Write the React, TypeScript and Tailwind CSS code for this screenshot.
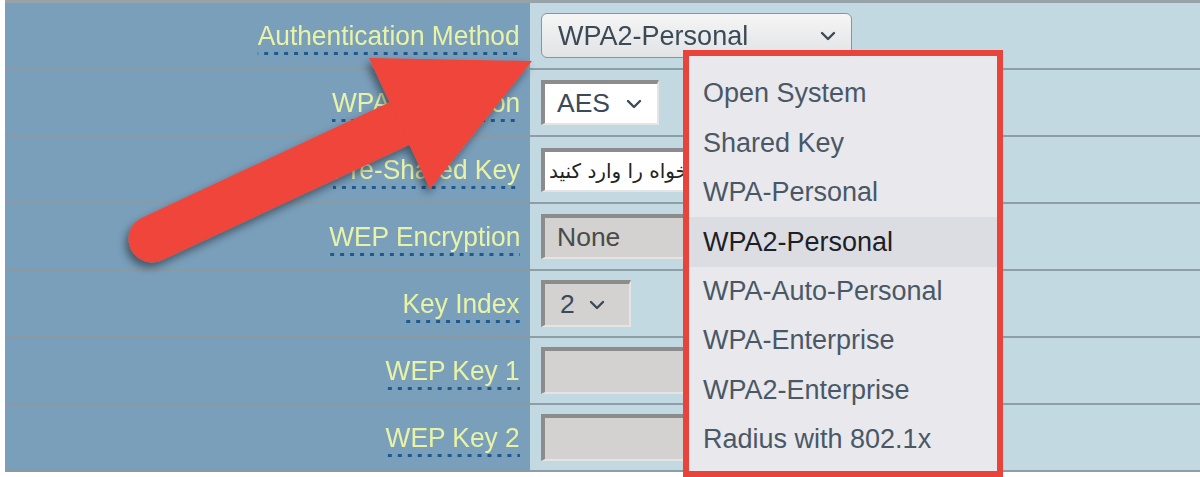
import React from "react";

const Chevron = ({ className = "" }: { className?: string }) => (
  <svg width="16" height="10" viewBox="0 0 16 10" className={className}>
    <polyline points="2,2 8,8 14,2" fill="none" stroke="currentColor" strokeWidth="2.4" strokeLinecap="round" strokeLinejoin="round" />
  </svg>
);

const labels = [
  "Authentication Method",
  "WPA Encryption",
  "Pre-Shared Key",
  "WEP Encryption",
  "Key Index",
  "WEP Key 1",
  "WEP Key 2",
];

const options = [
  "Open System",
  "Shared Key",
  "WPA-Personal",
  "WPA2-Personal",
  "WPA-Auto-Personal",
  "WPA-Enterprise",
  "WPA2-Enterprise",
  "Radius with 802.1x",
];

const inset = "border-t-[4px] border-l-[4px] border-r-[2px] border-b-[2px] border-t-[#8c8c8c] border-l-[#8c8c8c] border-r-[#e4e4e4] border-b-[#e4e4e4]";

function Control({ i }: { i: number }) {
  if (i === 0)
    return (
      <div className="w-[311px] h-[45px] rounded-[6px] border border-[#8a949b] bg-gradient-to-b from-[#f5f5f5] to-[#e1e3e5] flex items-center justify-between pl-[16px] pr-[15px]">
        <span className="inline-block origin-left scale-x-[0.965] text-[28px] text-[#3c4a57]">WPA2-Personal</span>
        <Chevron className="text-[#3c4a57]" />
      </div>
    );
  if (i === 1)
    return (
      <div className={`w-[118px] h-[45px] bg-white ${inset} flex items-center pl-[12px] text-[26.5px] text-[#3c4a57]`}>
        <span>AES</span>
        <Chevron className="ml-[16px] text-[#3c4a57]" />
      </div>
    );
  if (i === 2)
    return (
      <div className={`w-[420px] h-[44px] bg-white ${inset} flex items-center pl-[4px]`}>
        <div className="w-[134px] overflow-hidden whitespace-nowrap">
          <span dir="rtl" className="font-['DejaVu_Sans',sans-serif] text-[20px] text-[#222] whitespace-nowrap">
            لطفا رمز عبور دلخواه را وارد کنید
          </span>
        </div>
      </div>
    );
  if (i === 3)
    return (
      <div className={`w-[420px] h-[45px] bg-[#d3d2d0] ${inset} flex items-center pl-[12px] text-[26.5px] text-[#4a4a4a]`}>
        <span>None</span>
      </div>
    );
  if (i === 4)
    return (
      <div className={`w-[90px] h-[47px] bg-[#d3d2d0] ${inset} flex items-center pl-[15px] text-[26.5px] text-[#3c4a57]`}>
        <span>2</span>
        <Chevron className="ml-[14px] text-[#3c4a57]" />
      </div>
    );
  return <div className={`w-[420px] h-[47px] bg-[#d3d2d0] ${inset}`} />;
}

export default function App() {
  return (
    <div className="relative w-[1200px] h-[477px] bg-white overflow-hidden font-['Liberation_Sans',Arial,sans-serif]">
      <div className="ml-[5px] border-t-[3px] border-t-[#98a3a9]">
        {labels.map((l, i) => (
          <div key={l} className="flex h-[67px]">
            <div className="w-[525px] bg-[#7a9fbb] border-b-2 border-b-[#8b99a0] flex items-center justify-end pr-[10px]">
              <span className="inline-block mt-[4px] origin-right scale-x-[0.94] leading-[30px] pb-[4px] text-[28px] text-[#e9f3a6] bg-[linear-gradient(to_right,#1f5a8f_4px,transparent_4px)] bg-[length:10.6px_3px] bg-repeat-x bg-bottom">
                {l}
              </span>
            </div>
            <div className="flex-1 bg-[#c2d9e2] border-b-2 border-b-[#8d9ea7] flex items-center pl-[11px]">
              <Control i={i} />
            </div>
          </div>
        ))}
      </div>

      {/* red arrow */}
      <svg className="absolute left-0 top-0 pointer-events-none" width="1200" height="477" viewBox="0 0 1200 477">
        <defs>
          <filter id="sh" x="-20%" y="-20%" width="140%" height="140%">
            <feDropShadow dx="-3" dy="5" stdDeviation="4" floodColor="#000" floodOpacity="0.45" />
          </filter>
        </defs>
        <g filter="url(#sh)" fill="#f0443b">
          <line x1="152" y1="239" x2="405" y2="121" stroke="#f0443b" strokeWidth="47" strokeLinecap="round" />
          <polygon points="369,58 532,61 430,189" />
        </g>
      </svg>

      {/* dropdown list */}
      <div className="absolute left-[683px] top-[50px] w-[320px] h-[427px] border-[6px] border-[#e8443b] bg-[#e8e8ed] pt-[13px]">
        {options.map((o) => (
          <div
            key={o}
            className={`h-[49.4px] flex items-center pl-[14px] text-[27px] ${
              o === "WPA2-Personal" ? "bg-[#dcdde3] text-[#1d2126]" : "text-[#4a5866]"
            }`}
          >
            {o}
          </div>
        ))}
      </div>
    </div>
  );
}
